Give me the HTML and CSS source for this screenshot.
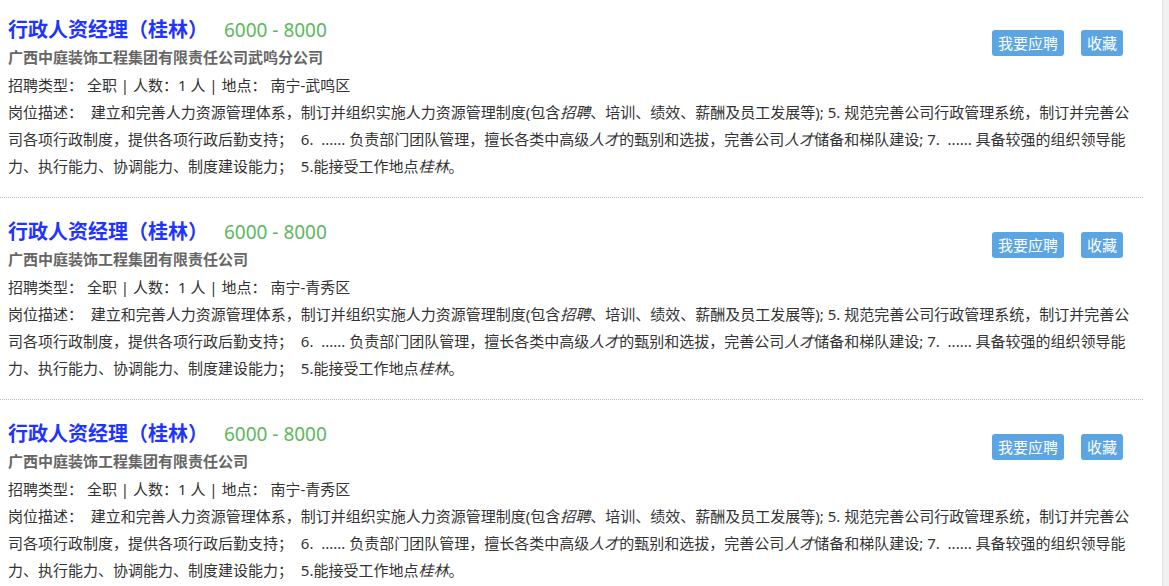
FILE: index.html
```html
<!DOCTYPE html>
<html lang="zh-CN">
  <head>
    <meta charset="UTF-8" />
    <meta name="viewport" content="width=device-width, initial-scale=1.0" />
    <title>职位列表</title>
    <link rel="stylesheet" href="styles.css">
  </head>
  <body>
    <div class="page">
      <div class="job-list">
        <div class="job-item">
          <div class="job-top">
            <div class="job-main">
              <div class="job-title">
                <a class="job-name" href="#">行政人资经理（桂林）</a>
                <span class="job-salary">6000 - 8000</span>
              </div>
              <div class="job-company">广西中庭装饰工程集团有限责任公司武鸣分公司</div>
              <div class="job-info">招聘类型：&nbsp;全职 | 人数：1 人 | 地点：&nbsp;南宁-武鸣区</div>
            </div>
            <div class="job-actions">
              <button class="btn btn-apply">我要应聘</button>
              <button class="btn btn-fav">收藏</button>
            </div>
          </div>
          <div class="job-desc">岗位描述：&nbsp;&nbsp;建立和完善人力资源管理体系，制订并组织实施人力资源管理制度(包含<em>招聘</em>、培训、绩效、薪酬及员工发展等); 5. 规范完善公司行政管理系统，制订并完善公司各项行政制度，提供各项行政后勤支持；&nbsp;&nbsp;6.&nbsp;&nbsp;...... 负责部门团队管理，擅长各类中高级<em>人才</em>的甄别和选拔，完善公司<em>人才</em>储备和梯队建设; 7.&nbsp;&nbsp;...... 具备较强的组织领导能力、执行能力、协调能力、制度建设能力；&nbsp;&nbsp;5.能接受工作地点<em>桂林</em>。</div>
        </div>

        <div class="job-item">
          <div class="job-top">
            <div class="job-main">
              <div class="job-title">
                <a class="job-name" href="#">行政人资经理（桂林）</a>
                <span class="job-salary">6000 - 8000</span>
              </div>
              <div class="job-company">广西中庭装饰工程集团有限责任公司</div>
              <div class="job-info">招聘类型：&nbsp;全职 | 人数：1 人 | 地点：&nbsp;南宁-青秀区</div>
            </div>
            <div class="job-actions">
              <button class="btn btn-apply">我要应聘</button>
              <button class="btn btn-fav">收藏</button>
            </div>
          </div>
          <div class="job-desc">岗位描述：&nbsp;&nbsp;建立和完善人力资源管理体系，制订并组织实施人力资源管理制度(包含<em>招聘</em>、培训、绩效、薪酬及员工发展等); 5. 规范完善公司行政管理系统，制订并完善公司各项行政制度，提供各项行政后勤支持；&nbsp;&nbsp;6.&nbsp;&nbsp;...... 负责部门团队管理，擅长各类中高级<em>人才</em>的甄别和选拔，完善公司<em>人才</em>储备和梯队建设; 7.&nbsp;&nbsp;...... 具备较强的组织领导能力、执行能力、协调能力、制度建设能力；&nbsp;&nbsp;5.能接受工作地点<em>桂林</em>。</div>
        </div>

        <div class="job-item">
          <div class="job-top">
            <div class="job-main">
              <div class="job-title">
                <a class="job-name" href="#">行政人资经理（桂林）</a>
                <span class="job-salary">6000 - 8000</span>
              </div>
              <div class="job-company">广西中庭装饰工程集团有限责任公司</div>
              <div class="job-info">招聘类型：&nbsp;全职 | 人数：1 人 | 地点：&nbsp;南宁-青秀区</div>
            </div>
            <div class="job-actions">
              <button class="btn btn-apply">我要应聘</button>
              <button class="btn btn-fav">收藏</button>
            </div>
          </div>
          <div class="job-desc">岗位描述：&nbsp;&nbsp;建立和完善人力资源管理体系，制订并组织实施人力资源管理制度(包含<em>招聘</em>、培训、绩效、薪酬及员工发展等); 5. 规范完善公司行政管理系统，制订并完善公司各项行政制度，提供各项行政后勤支持；&nbsp;&nbsp;6.&nbsp;&nbsp;...... 负责部门团队管理，擅长各类中高级<em>人才</em>的甄别和选拔，完善公司<em>人才</em>储备和梯队建设; 7.&nbsp;&nbsp;...... 具备较强的组织领导能力、执行能力、协调能力、制度建设能力；&nbsp;&nbsp;5.能接受工作地点<em>桂林</em>。</div>
        </div>
      </div>
      <div class="side-strip"></div>
    </div>
  </body>
</html>
```

FILE: styles.css
```css
* {
  padding: 0;
  margin: 0;
  box-sizing: border-box;
}
body {
  font-family: "Noto Sans", "Noto Sans CJK SC", sans-serif;
  font-size: 15px;
  color: #333;
  background: #fff;
}
.page {
  display: flex;
  min-height: 586px;
}
.job-list {
  width: 1143px;
}
.side-strip {
  margin-left: auto;
  width: 7px;
  background-color: #f1f1f1;
  border-left: 1px solid #e2e2e2;
}
.job-item {
  padding: 19px 20px 17px 8px;
  border-bottom: 1px dotted #bbb;
}
.job-item:first-child {
  padding-top: 15px;
}
.job-top {
  display: flex;
  justify-content: space-between;
}
.job-title {
  line-height: 28px;
  height: 28px;
}
.job-name {
  font-family: "Noto Sans CJK SC", sans-serif;
  font-size: 20px;
  font-weight: bold;
  color: #1f35ff;
  text-decoration: none;
}
.job-salary {
  font-size: 19px;
  color: #5cb85c;
  margin-left: 12px;
}
.job-company {
  font-weight: bold;
  color: #666;
  line-height: 28px;
}
.job-info {
  line-height: 28px;
}
.job-actions {
  display: flex;
  gap: 17px;
  margin-top: 15px;
  align-items: flex-start;
}
.btn {
  height: 26px;
  line-height: 26px;
  font-family: "Noto Sans CJK SC", sans-serif;
  font-size: 15px;
  color: #fff;
  background-color: #5ba5e2;
  border: none;
  border-radius: 3px;
  padding: 0 6px;
}
.job-desc {
  line-height: 27px;
  margin-right: -12px;
}
.job-desc em {
  font-style: italic;
}
```
